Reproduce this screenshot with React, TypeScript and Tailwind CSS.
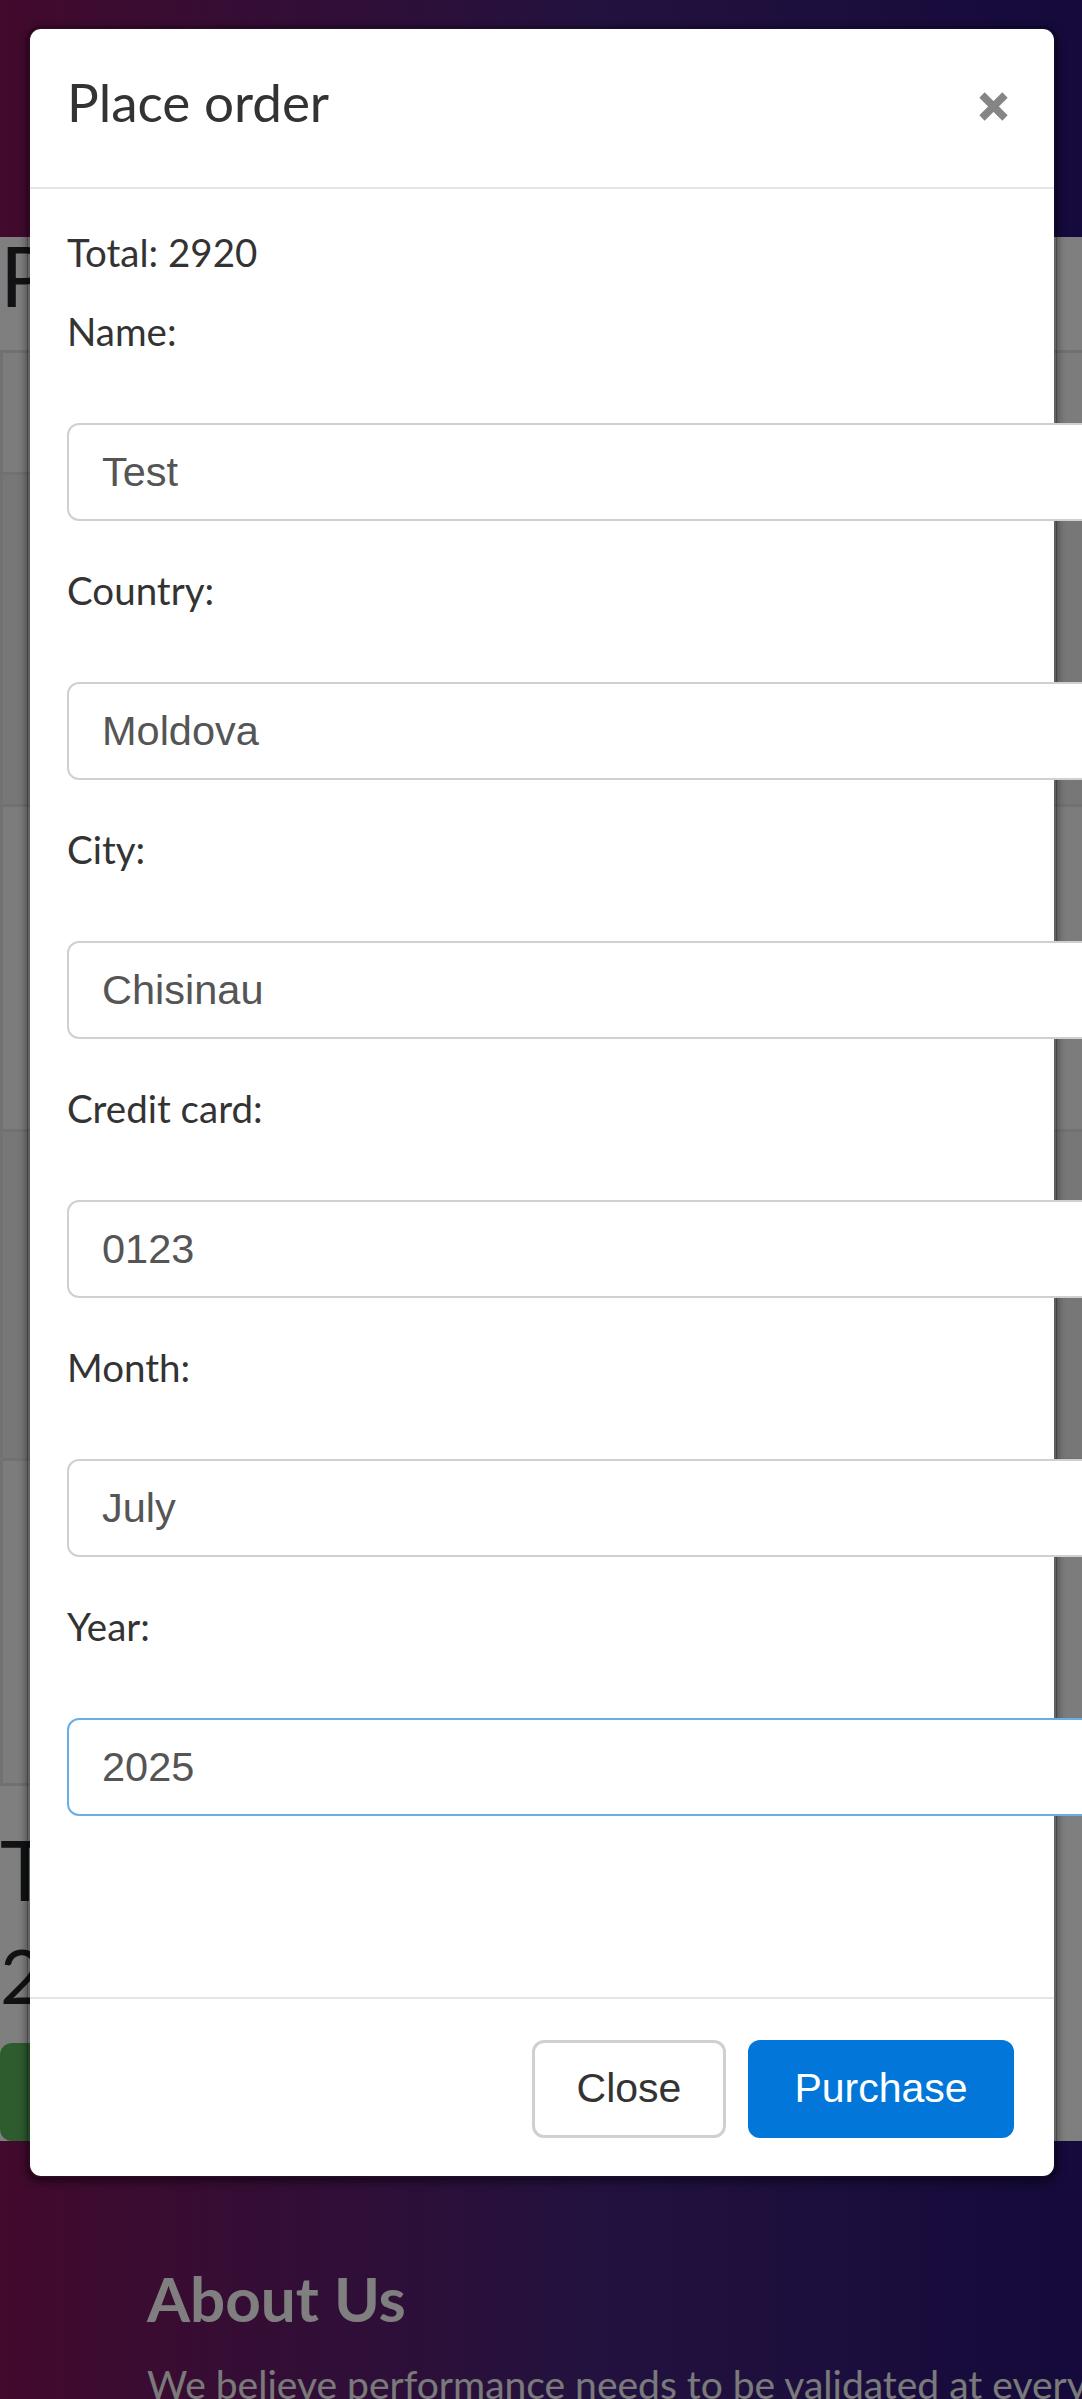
import { useState } from "react";

const tableRows = [
  "h-[122px] bg-[#f9f9f9]",
  "h-[332px] bg-[#efefef]",
  "h-[325px] bg-[#f9f9f9]",
  "h-[329px] bg-[#efefef]",
  "h-[325px] bg-[#f9f9f9]",
];

const orderFields = [
  { label: "Name:", value: "Test" },
  { label: "Country:", value: "Moldova" },
  { label: "City:", value: "Chisinau" },
  { label: "Credit card:", value: "0123" },
  { label: "Month:", value: "July" },
  { label: "Year:", value: "2025", focused: true },
];

function CloseIcon() {
  return (
    <svg width="31" height="29" viewBox="0 0 31 29" className="mr-[8px] mt-[20px]">
      <path d="M4 3 L27 26 M27 3 L4 26" stroke="#858585" strokeWidth="7.5" strokeLinecap="butt" />
    </svg>
  );
}

export default function App() {
  const [values, setValues] = useState(orderFields.map((f) => f.value));

  return (
    <div className="relative h-[2399px] w-full overflow-hidden bg-white font-['Lato',sans-serif] text-[#212529]">
      {/* page behind the modal */}
      <nav className="h-[237px] bg-[linear-gradient(to_right,#84145a,#46247e_55%,#2a1476)]" />

      <h2 className="h-[113px] text-[84px] leading-[76px]">Products</h2>
      <div className="border-l-[3px] border-[#dee2e6]">
        {tableRows.map((cls, idx) => (
          <div key={idx} className={`${cls} border-t-[3px] border-[#dee2e6]`} />
        ))}
      </div>
      <div className="border-t-[3px] border-[#dee2e6]" />

      <h2 className="mt-[45px] text-[84px] leading-[76px]">Total</h2>
      <h3 className="mt-[34px] text-[75px] leading-[68px]">2920</h3>
      <button className="mt-[34px] h-[98px] w-[330px] rounded-[12px] bg-[#5cb85c] text-[41px] text-white">
        Place Order
      </button>

      <footer className="h-[258px] bg-[linear-gradient(to_right,#84145a,#46247e_55%,#2a1476)] pl-[147px] pt-[120px] text-white">
        <h4 className="text-[62px] font-bold leading-[1.2]">About Us</h4>
        <p className="mt-[19px] w-[1000px] text-[39px] leading-[60px] text-[#f4f4f4]">
          We believe performance needs to be validated at every level of your software development cycle.
        </p>
      </footer>

      {/* backdrop */}
      <div className="absolute inset-0 bg-black/50" />

      {/* modal */}
      <div className="absolute left-[27px] top-[26px] w-[1030px] rounded-[14px] border-[3px] border-black/20 bg-white bg-clip-padding shadow-[0_3px_9px_rgba(0,0,0,0.5)]">
        <div className="flex h-[160px] items-start justify-between border-b-2 border-[#e5e5e5] pl-[37px] pr-[37px] pt-[43px]">
          <h4 className="text-[53px] leading-[60px] text-[#333]">Place order</h4>
          <button aria-label="Close">
            <CloseIcon />
          </button>
        </div>

        <div className="px-[37px] pb-[181px] pt-[35px] text-[38.5px] leading-[56px] text-[#333]">
          <p>Total: 2920</p>
          {orderFields.map((field, idx) => (
            <div key={field.label} className={idx === 0 ? "mt-[23px]" : "mt-[41px]"}>
              <label className="block">{field.label}</label>
              <input
                value={values[idx]}
                onChange={(e) => setValues((prev) => prev.map((v, i) => (i === idx ? e.target.value : v)))}
                className={`mt-[64px] block h-[98px] w-[1040px] rounded-[12px] border-2 bg-white pl-[33px] font-['Liberation_Sans',Arial,sans-serif] text-[41.5px] text-[#555] outline-none ${field.focused ? "border-[#66afe9]" : "border-[#d0d0d0]"}`}
              />
            </div>
          ))}
        </div>

        <div className="flex justify-end gap-[22px] border-t-2 border-[#e5e5e5] pb-[38px] pr-[40px] pt-[41px] font-['Liberation_Sans',Arial,sans-serif] text-[41px]">
          <button className="h-[98px] w-[194px] rounded-[12px] border-[3px] border-[#d0d0d0] bg-white text-[#333]">
            Close
          </button>
          <button className="h-[98px] w-[266px] rounded-[12px] bg-[#0277d9] text-white">Purchase</button>
        </div>
      </div>
    </div>
  );
}
